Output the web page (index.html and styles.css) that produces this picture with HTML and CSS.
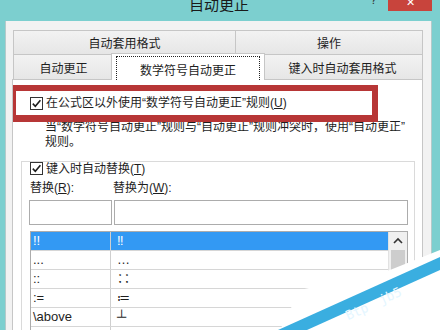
FILE: index.html
```html
<!DOCTYPE html>
<html lang="zh-CN">
<head>
  <meta charset="UTF-8">
  <title>自动更正</title>
  <link rel="stylesheet" href="styles.css">
</head>
<body>
  <div class="title-bar">
    <span class="title">自动更正</span>
    <span class="help">?</span>
    <span class="close-btn">✕</span>
  </div>
  <div class="window">
    <div class="tabs">
      <div class="tab-row row-top">
        <div class="tab tab-fmt">自动套用格式</div>
        <div class="tab tab-act">操作</div>
      </div>
      <div class="tab-row row-bottom">
        <div class="tab tab-ac">自动更正</div>
        <div class="tab tab-sel"><span class="focus">数学符号自动更正</span></div>
        <div class="tab tab-type">键入时自动套用格式</div>
      </div>
    </div>
    <div class="panel">
      <div class="highlight">
        <span class="check"><svg width="11" height="11" viewBox="0 0 11 11"><path d="M1.8 5.6 L4.3 8.2 L9.4 2.2" fill="none" stroke="#1c1c1c" stroke-width="1.6"/></svg></span>
        <span class="check-label">在公式区以外使用“数学符号自动更正”规则(<u>U</u>)</span>
      </div>
      <p class="note">当“数学符号自动更正”规则与“自动更正”规则冲突时，使用“自动更正”<br>规则。</p>
      <div class="group">
        <div class="legend">
          <span class="check"><svg width="11" height="11" viewBox="0 0 11 11"><path d="M1.8 5.6 L4.3 8.2 L9.4 2.2" fill="none" stroke="#1c1c1c" stroke-width="1.6"/></svg></span>
          <span class="check-label">键入时自动替换(<u>T</u>)</span>
        </div>
        <div class="labels">
          <span class="lbl-from">替换(<u>R</u>):</span>
          <span>替换为(<u>W</u>):</span>
        </div>
        <div class="inputs">
          <div class="input input-from"></div>
          <div class="input input-to"></div>
        </div>
        <div class="list">
          <div class="rows">
            <div class="row selected"><span class="c1">!!</span><span class="c2">‼</span></div>
            <div class="row"><span class="c1">...</span><span class="c2">…</span></div>
            <div class="row"><span class="c1">::</span><span class="c2">∷</span></div>
            <div class="row"><span class="c1">:=</span><span class="c2">≔</span></div>
            <div class="row"><span class="c1">\above</span><span class="c2">┴</span></div>
            <div class="row"><span class="c1"></span><span class="c2"></span></div>
          </div>
          <div class="scrollbar">
            <div class="arrow"><svg width="16" height="12" viewBox="0 0 16 12"><path d="M4 8 L8 4 L12 8" fill="none" stroke="#333" stroke-width="1.6"/></svg></div>
            <div class="thumb"></div>
          </div>
        </div>
      </div>
    </div>
  </div>

  <!-- 水印 -->
  <svg class="watermark" width="170" height="90" viewBox="270 240 170 90">
    <polygon points="300,290 390,270 440,250 440,330 280,330" fill="#ffffff"/>
    <polygon points="278,330 440,257 440,270 307,330" fill="#3aaee0"/>
    <text x="345" y="318" transform="rotate(-24 352 312)" fill="#e4f6ff" font-size="13" font-family="DejaVu Sans Mono, monospace">Btp</text>
    <text x="378" y="302" transform="rotate(-24 386 296)" fill="#e4f6ff" font-size="13" font-family="DejaVu Sans Mono, monospace">jb5</text>
  </svg>
</body>
</html>
```

FILE: styles.css
```css
body {
  margin: 0;
  width: 440px;
  height: 330px;
  overflow: hidden;
  position: relative;
  background: #7ccfcf;
  font-family: "Liberation Sans", "Noto Sans CJK SC", sans-serif;
  font-size: 12px;
  color: #1e1e1e;
}
.title-bar {
  height: 21px;
  display: flex;
  align-items: flex-start;
  padding-right: 8px;
  overflow: hidden;
}
.title {
  margin-left: 189px;
  margin-top: -4px;
  font-size: 15px;
  line-height: 17px;
  color: #1a1a1a;
}
.help {
  margin-left: auto;
  margin-right: 11px;
  margin-top: -6px;
  font-size: 12px;
  line-height: 12px;
  color: #333;
}
.close-btn {
  width: 44px;
  height: 11px;
  background: #c8443c;
  color: #fff;
  text-align: center;
  font-size: 11px;
  line-height: 4px;
  overflow: hidden;
}
.window {
  margin-left: 5px;
  width: 427px;
  height: 309px;
  box-sizing: border-box;
  background: #f2f2f2;
  border-left: 1px solid #b4caca;
  border-right: 1px solid #b4caca;
  padding: 9px 0 0 6px;
}
.tabs {
  margin-left: 1px;
  width: 410px;
}
.tab-row {
  display: flex;
}
.row-top {
  height: 25px;
}
.row-bottom {
  height: 24px;
}
.tab {
  box-sizing: border-box;
  background: linear-gradient(to bottom, #f2f2f2, #e6e6e6);
  border: 1px solid #c6c6c6;
  display: flex;
  align-items: center;
  justify-content: center;
  white-space: nowrap;
}
.row-top .tab + .tab {
  border-left: none;
}
.row-bottom .tab {
  border-top: none;
  border-bottom: none;
}
.tab-fmt {
  width: 223px;
}
.tab-act {
  flex: 1;
}
.tab-ac {
  width: 100px;
  border-right: none;
}
.tab-sel {
  width: 154px;
  margin: -2px -2px -1px;
  height: 27px;
  background: #fff;
  border: 1px solid #c6c6c6 !important;
  border-bottom: none !important;
  position: relative;
  z-index: 2;
  align-items: stretch;
  padding: 2px 4px 0 4px;
}
.focus {
  flex: 1;
  border: 1px dotted #222;
  border-bottom: none;
  display: flex;
  align-items: center;
  justify-content: center;
  padding-top: 1px;
}
.tab-type {
  flex: 1;
  border-left: none;
}
.panel {
  width: 411px;
  height: 251px;
  box-sizing: border-box;
  background: #fff;
  border: 1px solid #c6c6c6;
  border-bottom: none;
  overflow: hidden;
}
.highlight {
  margin: 5px 0 0 -3px;
  width: 368px;
  height: 37px;
  box-sizing: border-box;
  border: 6px solid #b73636;
  border-bottom-width: 7px;
  padding-left: 14px;
  display: flex;
  align-items: center;
  position: relative;
}
.check {
  width: 13px;
  height: 13px;
  box-sizing: border-box;
  border: 1px solid #333;
  background: #fff;
  display: flex;
  align-items: center;
  justify-content: center;
  flex-shrink: 0;
}
.check-label {
  margin-left: 3px;
  white-space: nowrap;
  line-height: 14px;
}
.note {
  margin: -2px 0 0 32px;
  line-height: 15px;
  white-space: nowrap;
}
.group {
  margin: 11px 0 0 8px;
  width: 394px;
  height: 200px;
  box-sizing: border-box;
  border: 1px solid #dadada;
  border-bottom: none;
  padding-left: 8px;
}
.legend {
  display: flex;
  align-items: center;
  height: 13px;
}
.labels {
  display: flex;
  margin-top: 6px;
  line-height: 14px;
}
.lbl-from {
  width: 83px;
}
.inputs {
  display: flex;
  gap: 2px;
  margin: 5px 0 0 -1px;
}
.input {
  height: 25px;
  box-sizing: border-box;
  border: 1px solid #acacac;
  background: #fff;
}
.input-from {
  width: 83px;
}
.input-to {
  width: 294px;
}
.list {
  margin-top: 6px;
  width: 378px;
  height: 120px;
  box-sizing: border-box;
  border: 1px solid #acacac;
  display: flex;
}
.rows {
  flex: 1;
}
.row {
  display: flex;
  height: 19px;
  box-sizing: border-box;
  border-bottom: 1px solid #d6d6d6;
  font-size: 13px;
  line-height: 18px;
}
.row .c1 {
  width: 80px;
  box-sizing: border-box;
  padding-left: 2px;
  border-right: 1px solid #cfcfcf;
}
.row .c2 {
  padding-left: 6px;
}
.row.selected {
  background: #3399f3;
  color: #fff;
}
.scrollbar {
  width: 18px;
  background: #f0f0f0;
  border-left: 1px solid #e2e2e2;
}
.arrow {
  height: 18px;
  display: flex;
  align-items: center;
  justify-content: center;
}
.thumb {
  margin: 0 2px;
  height: 50px;
  background: #cdcdcd;
}
.watermark {
  position: absolute;
  left: 270px;
  top: 240px;
}
```
